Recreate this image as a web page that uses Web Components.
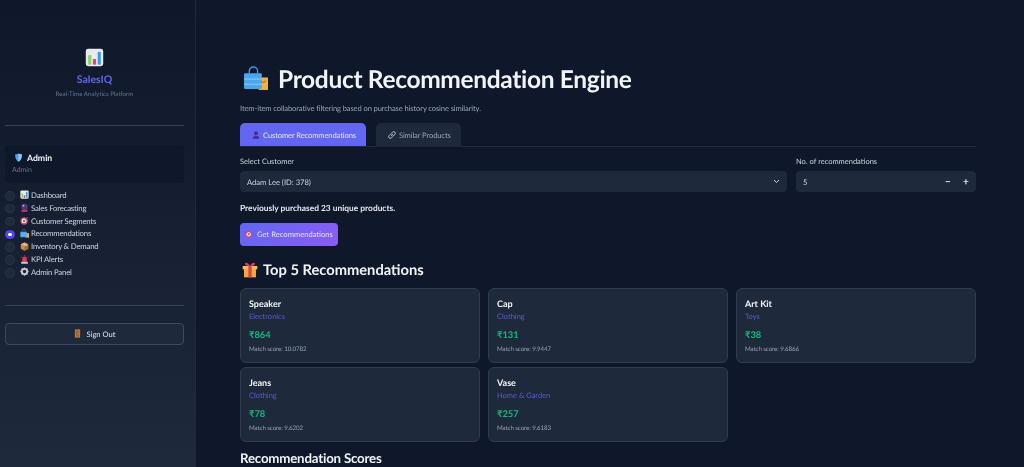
<!DOCTYPE html>
<html lang="en">
<head>
<meta charset="utf-8">
<title>SalesIQ</title>
<style>
  html, body { margin: 0; height: 467px; overflow: hidden; background: #0f172a; }
  body { font-family: "Lato", "Noto Sans", sans-serif; color: #e2e8f0; text-rendering: geometricPrecision; }
</style>
</head>
<body>
<sales-app>
  <side-bar slot="side">
    <nav-radio icon="chart">Dashboard</nav-radio>
    <nav-radio icon="ball">Sales Forecasting</nav-radio>
    <nav-radio icon="target">Customer Segments</nav-radio>
    <nav-radio icon="bags" checked>Recommendations</nav-radio>
    <nav-radio icon="box">Inventory &amp; Demand</nav-radio>
    <nav-radio icon="siren">KPI Alerts</nav-radio>
    <nav-radio icon="gear">Admin Panel</nav-radio>
  </side-bar>
  <page-title icon="bags">Product Recommendation Engine</page-title>
  <p class="sub">Item-item collaborative filtering based on purchase history cosine similarity.</p>
  <tab-bar>
    <tab-item icon="bust" active>Customer Recommendations</tab-item>
    <tab-item icon="link">Similar Products</tab-item>
  </tab-bar>
  <form-row>
    <select-box label="Select Customer" value="Adam Lee (ID: 378)"></select-box>
    <number-box label="No. of recommendations" value="5"></number-box>
  </form-row>
  <p class="count">Previously purchased 23 unique products.</p>
  <go-button icon="target">Get Recommendations</go-button>
  <section-head icon="gift">Top 5 Recommendations</section-head>
  <card-grid>
    <rec-card name="Speaker" category="Electronics" price="₹864" score="10.0782"></rec-card>
    <rec-card name="Cap" category="Clothing" price="₹131" score="9.9447"></rec-card>
    <rec-card name="Art Kit" category="Toys" price="₹38" score="9.6866"></rec-card>
    <rec-card name="Jeans" category="Clothing" price="₹78" score="9.6202"></rec-card>
    <rec-card name="Vase" category="Home &amp; Garden" price="₹257" score="9.6183"></rec-card>
  </card-grid>
  <section-head plain>Recommendation Scores</section-head>
</sales-app>

<script>
const ICONS = {
  chart: `<rect x="1" y="1" width="22" height="22" rx="3" fill="#e8eaf0"/><rect x="4" y="9" width="4" height="12" fill="#8bd45a"/><rect x="10" y="14" width="4" height="7" fill="#e8407a"/><rect x="16" y="5" width="4" height="16" fill="#3d9ae8"/>`,
  shield: `<path d="M12 1c3 2 6 2.500 9 2.500 0 9-2 16-9 20-7-4-9-11-9-20 3 0 6-.5 9-2.500z" fill="#4aa3ea"/><path d="M12 1c3 2 6 2.500 9 2.500 0 9-2 16-9 20z" fill="#8ac9f5"/>`,
  ball: `<circle cx="12" cy="10" r="8.500" fill="#4b3a78"/><circle cx="9" cy="7" r="2.500" fill="#c9a8d8"/><path d="M5 18h14l2 5H3z" fill="#c8386a"/>`,
  target: `<circle cx="11" cy="13" r="10" fill="#e0405a"/><circle cx="11" cy="13" r="6.500" fill="#eef0f4"/><circle cx="11" cy="13" r="3.200" fill="#e0405a"/><path d="M11 13 21 3" stroke="#3d9ae8" stroke-width="2"/>`,
  bags: `<path d="M6 7V5a4 4 0 0 1 8 0v2" fill="none" stroke="#3d9ae8" stroke-width="1.300"/><rect x="15" y="11" width="9" height="12" fill="#f5b041"/><path d="M17 13c0 3 3 3.500 5 1" fill="none" stroke="#b9701c" stroke-width="1"/><rect x="1" y="7" width="17" height="15" rx="1" fill="#4aa6ee"/><rect x="1" y="12" width="17" height="1" fill="#8ccaf7"/><rect x="1" y="17" width="17" height="1" fill="#8ccaf7"/>`,
  box: `<path d="M12 1 22 6v12l-10 5L2 18V6z" fill="#c98a4b"/><path d="M12 11 22 6v12l-10 5z" fill="#a86c34"/><path d="M2 6l10 5 10-5-10-5z" fill="#e0a970"/><path d="M7 3.500l10 5v3" stroke="#f0d0a8" stroke-width="2" fill="none"/>`,
  siren: `<path d="M6 18V10a6 6 0 0 1 12 0v8z" fill="#e8384f"/><rect x="3" y="18" width="18" height="5" rx="1" fill="#c8ccd4"/><path d="M2 5l3 2M22 5l-3 2M12 0v2" stroke="#e8384f" stroke-width="1.500"/>`,
  gear: `<circle cx="12" cy="12" r="7" fill="none" stroke="#c8ccd4" stroke-width="5"/><path d="M12 1v22M1 12h22M4.200 4.200l15.600 15.600M19.800 4.200 4.200 19.800" stroke="#c8ccd4" stroke-width="3.500"/><circle cx="12" cy="12" r="4.500" fill="#1a2438"/>`,
  door: `<rect x="5" y="1" width="14" height="22" fill="#c9793a"/><rect x="7.500" y="3" width="9" height="18" fill="#a8622c"/><circle cx="15" cy="12" r="1" fill="#f5c98a"/>`,
  bust: `<circle cx="12" cy="7" r="6" fill="#4a2d8a"/><path d="M2 23c0-7 5-9 10-9s10 2 10 9z" fill="#4a2d8a"/>`,
  link: `<g fill="none" stroke="#c0c6d0" stroke-width="3" stroke-linecap="round"><path d="M10 14a5 5 0 0 0 7 0l4-4a5 5 0 0 0-7-7l-2 2"/><path d="M14 10a5 5 0 0 0-7 0l-4 4a5 5 0 0 0 7 7l2-2"/></g>`,
  gift: `<rect x="3" y="10" width="18" height="13" fill="#f2a93b"/><rect x="1" y="6" width="22" height="5" fill="#f7bd55"/><rect x="9.500" y="6" width="5" height="17" fill="#e0405a"/><path d="M12 6C9 0 3 0 5 4c.6 1.300 4 2 7 2zM12 6c3-6 9-6 7-2-.6 1.300-4 2-7 2z" fill="#e0405a"/>`
};

// small helper, every element here is just a template in an open shadow root
const define = (name, css, html) => {
  customElements.define(name, class extends HTMLElement {
    constructor() {
      super();
      this.attachShadow({ mode: "open" });
    }
    connectedCallback() {
      this.shadowRoot.innerHTML = `<style>${css}</style>${html(this)}`;
    }
  });
};

const svg = (name, size) =>
  `<svg viewBox="0 0 24 24" width="${size}" height="${size}" aria-hidden="true">${ICONS[name] || ""}</svg>`;

define("sales-app", `
  :host { display: flex; width: 1024px; height: 467px; overflow: hidden; filter: blur(.3px); }
  .side { flex: 0 0 196px; }
  main { flex: 1; min-width: 0; padding: 66px 48px 0 44px; background: #0f172a; }
  ::slotted(p) { margin: 0; }
  ::slotted(.sub) { font-size: 7.600px; letter-spacing: -.12px; line-height: 11px; color: #94a3b8; margin: 9px 0 9px; }
  ::slotted(.count) { font-size: 8.400px; line-height: 12px; font-weight: 700; color: #e2e8f0; margin: 10px 0 9px; }
`, () => `<div class="side"><slot name="side"></slot></div><main><slot></slot></main>`);

define("side-bar", `
  :host { display: flex; flex-direction: column; box-sizing: border-box; width: 196px; height: 467px;
    background: linear-gradient(180deg, #0f172a 0%, #1e293b 100%); border-right: 1px solid #1e293b; padding: 48px 11px 0 5px; }
  .brand { display: flex; flex-direction: column; align-items: center; }
  .brand svg { display: block; }
  .name { font-size: 10.500px; line-height: 14px; font-weight: 700; color: #6366f1; margin-top: 6px; }
  .tag { font-size: 6.200px; line-height: 9px; color: #64748b; margin-top: 3px; }
  hr { border: 0; border-top: 1px solid #334155; margin: 0; width: 100%; }
  .user { background: #0f172a; border-radius: 4px; height: 38px; margin: 19px 0 5.500px; padding: 7px 7px; box-sizing: border-box; }
  .user b { display: flex; align-items: center; gap: 4px; font-size: 8.700px; line-height: 11px; color: #f1f5f9; padding-left: 2px; }
  .user span { display: block; font-size: 7px; line-height: 10px; color: #64748b; margin-top: 2px; }
  .nav { display: flex; flex-direction: column; height: 110px; }
  button { all: unset; box-sizing: border-box; display: flex; align-items: center; justify-content: center; gap: 4px;
    height: 22px; margin-top: 17px; padding-bottom: 1px; background: #1e293b; border: 1px solid #3b4a60; border-radius: 4px;
    font-size: 7.600px; color: #e2e8f0; }
`, () => `
  <div class="brand">${svg("chart", 19)}<div class="name">SalesIQ</div><div class="tag">Real-Time Analytics Platform</div></div>
  <hr style="margin-top:26px">
  <div class="user"><b>${svg("shield", 9)}Admin</b><span>Admin</span></div>
  <div class="nav"><slot></slot></div>
  <hr style="margin-top:6.500px">
  <button>${svg("door", 9)}Sign Out</button>`);

define("nav-radio", `
  :host { display: flex; align-items: center; height: 12.830px; font-size: 7.800px; letter-spacing: -.2px; color: #cbd5e1; }
  i { flex: none; box-sizing: border-box; width: 9.500px; height: 9.500px; border-radius: 50%; background: #1e293b; border: 1px solid #293548; margin-right: 5px; margin-top: 2px; position: relative; }
  i.on { background: #4f46e5; border-color: #4f46e5; }
  i.on::after { content: ""; position: absolute; inset: 2px; border-radius: 50%; background: #fff; }
  svg { margin-right: 2.500px; }
`, (el) => `<i class="${el.hasAttribute("checked") ? "on" : ""}"></i>${svg(el.getAttribute("icon"), 9)}<slot></slot>`);

define("page-title", `
  :host { display: flex; align-items: center; height: 28px; padding-left: 3px; }
  svg { margin-right: 10px; margin-top: -3px; }
  h1 { margin: 0; font-size: 24.500px; line-height: 28px; font-weight: 700; letter-spacing: -.33px; color: #f1f5f9; white-space: nowrap; }
`, (el) => `${svg(el.getAttribute("icon"), 25)}<h1><slot></slot></h1>`);

define("tab-bar", `
  :host { display: flex; gap: 10px; height: 24px; box-sizing: border-box; border-bottom: 1px solid #1e293b; }
`, () => `<slot></slot>`);

define("tab-item", `
  :host { display: flex; align-items: center; gap: 3px; height: 23px; padding: 0 10px 0 12px; box-sizing: border-box;
    border-radius: 5px 5px 0 0; background: #1e293b; color: #94a3b8; font-size: 7.600px; letter-spacing: -.12px; }
  :host([active]) { background: #6366f1; color: #e2e8f0; }
`, (el) => `${svg(el.getAttribute("icon"), 8)}<slot></slot>`);

define("form-row", `
  :host { display: grid; grid-template-columns: 547px 180px; gap: 9px; margin-top: 9px; }
`, () => `<slot></slot>`);

const fieldCss = `
  :host { display: block; }
  label { display: block; font-size: 7.500px; line-height: 11px; color: #cbd5e1; margin-bottom: 4px; }
  .box { display: flex; align-items: center; height: 21px; background: #1e293b; border-radius: 4px; padding: 0 1px 0 7px;
    font-size: 7.600px; color: #cbd5e1; }
  .val { flex: 1; }
`;

define("select-box", fieldCss, (el) => `
  <label>${el.getAttribute("label")}</label>
  <div class="box" style="padding-right:7px"><span class="val">${el.getAttribute("value")}</span>
  <svg width="7" height="5" viewBox="0 0 7 5"><path d="M1 1l2.500 2.500L6 1" fill="none" stroke="#cbd5e1" stroke-width="1"/></svg></div>`);

define("number-box", fieldCss + `
  b { font-weight: 700; font-size: 10px; width: 18px; text-align: center; color: #e2e8f0; }
`, (el) => `
  <label>${el.getAttribute("label")}</label>
  <div class="box"><span class="val">${el.getAttribute("value")}</span><b>−</b><b>+</b></div>`);

define("go-button", `
  :host { display: flex; align-items: center; justify-content: center; gap: 4px; width: 98px; height: 23px; box-sizing: border-box; padding-bottom: 2px; border-radius: 4px;
    background: linear-gradient(135deg, #6366f1, #8b5cf6); color: #e2e8f0; font-size: 7.600px; }
`, (el) => `${svg(el.getAttribute("icon"), 8)}<slot></slot>`);

define("section-head", `
  :host { display: flex; align-items: center; gap: 5px; height: 20px; margin: 14px 0 8px 2px; font-size: 14.700px; font-weight: 700; color: #f1f5f9; }
  :host([plain]) { margin: 6px 0 0; font-size: 13.300px; letter-spacing: -.2px; }
`, (el) => `${el.hasAttribute("icon") ? svg(el.getAttribute("icon"), 16) : ""}<span><slot></slot></span>`);

define("card-grid", `
  :host { display: grid; grid-template-columns: repeat(3, 240px); gap: 4px 8px; }
`, () => `<slot></slot>`);

define("rec-card", `
  :host { display: block; box-sizing: border-box; height: 75px; padding: 9px 8px; background: #1e293b; border: 1px solid #2f3d52; border-radius: 6px; }
  .n { font-size: 9px; line-height: 11px; font-weight: 700; color: #f1f5f9; }
  .c { font-size: 7.500px; line-height: 11px; color: #5b5bd6; margin-top: 2px; }
  .p { font-size: 9.300px; line-height: 12px; font-weight: 700; color: #10b981; margin-top: 7px; }
  .s { font-size: 6.200px; letter-spacing: -.1px; line-height: 9px; color: #94a3b8; margin-top: 4px; }
`, (el) => `
  <div class="n">${el.getAttribute("name")}</div>
  <div class="c">${el.getAttribute("category").replace("&", "&amp;")}</div>
  <div class="p">${el.getAttribute("price")}</div>
  <div class="s">Match score: ${el.getAttribute("score")}</div>`);
</script>
</body>
</html>
